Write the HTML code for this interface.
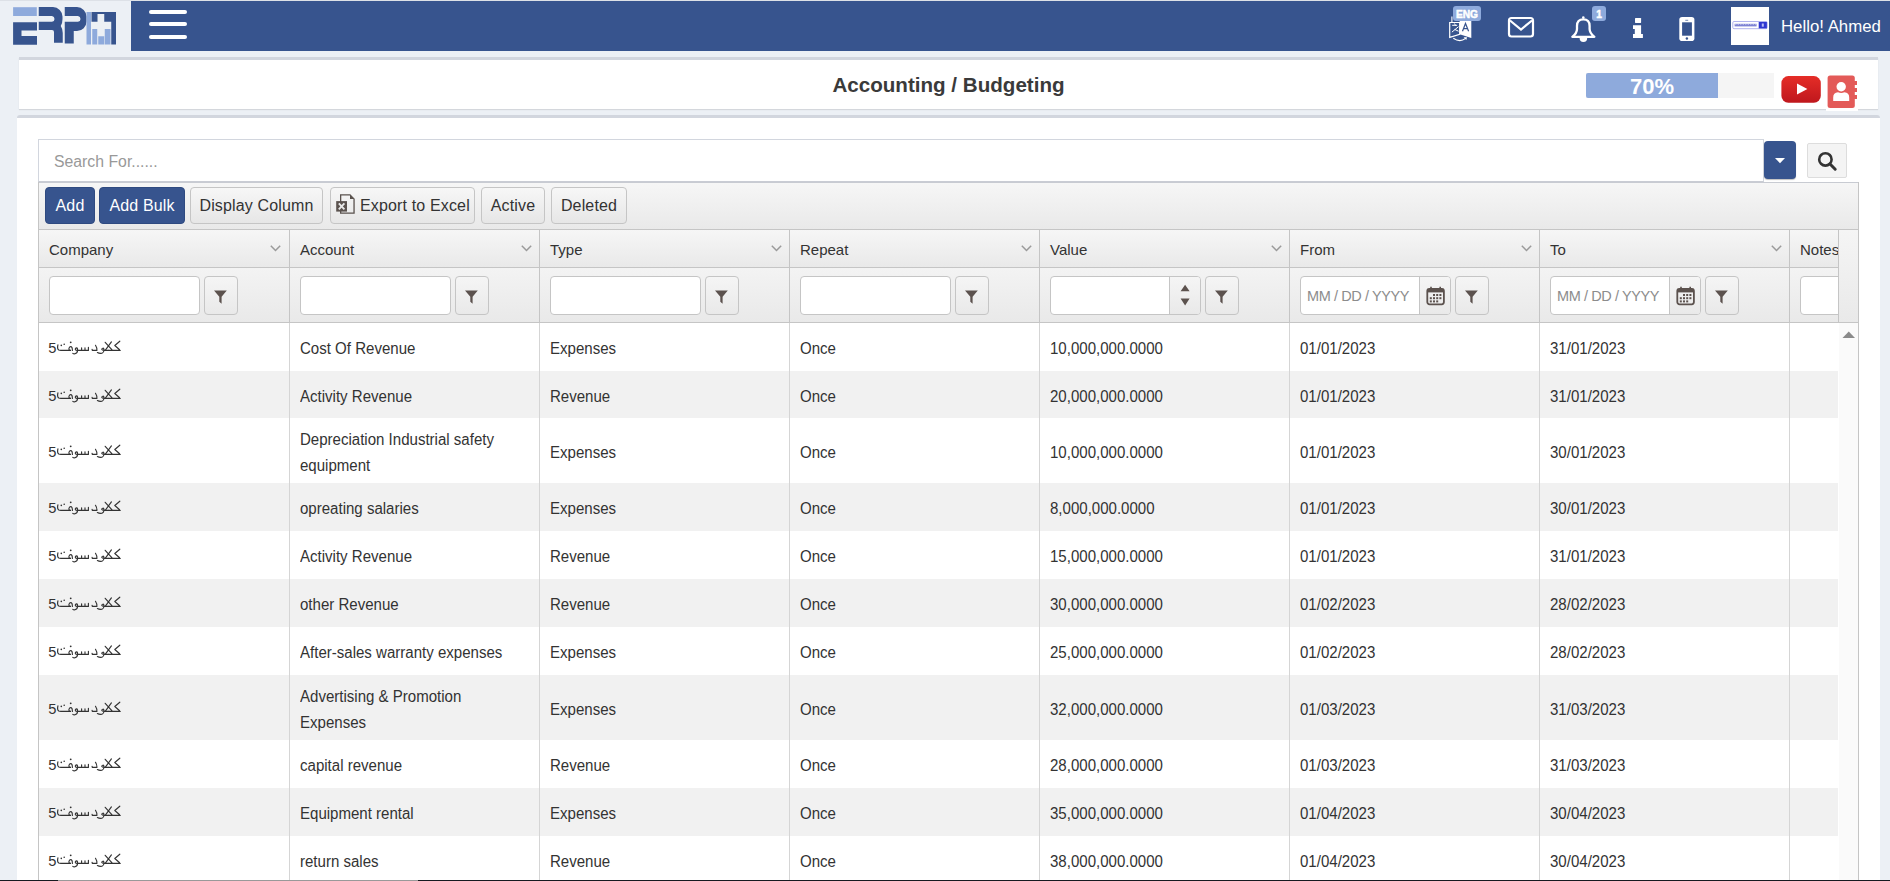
<!DOCTYPE html>
<html><head><meta charset="utf-8">
<style>
*{box-sizing:border-box;margin:0;padding:0}
html,body{width:1890px;height:881px;overflow:hidden}
body{background:#ecf0f5;font-family:"Liberation Sans",sans-serif;color:#333;position:relative}
.a{position:absolute}
#topline{left:0;top:0;width:1890px;height:1px;background:#dde1e7}
#nav{left:131px;top:1px;width:1759px;height:50px;background:#37548e}
.hb{left:149px;width:38px;height:4px;border-radius:2px;background:#fff}
.badge{background:#8eaadc;color:#fff;font-weight:bold;font-size:10.2px;-webkit-text-stroke:0.5px #fff;border-radius:3px;text-align:center;line-height:17px;height:15px}
#hello{left:1781px;top:16px;color:#fff;font-size:16.8px;line-height:22px;white-space:nowrap}
#hcard{left:19px;top:57px;width:1859px;height:52px;background:#fff;border-top:3px solid #d2d6de;box-shadow:0 1px 1px rgba(0,0,0,.1)}
#title{left:0;top:73px;width:1897px;text-align:center;font-weight:bold;font-size:20.6px;color:#3a3a3a;line-height:24px}
#card{left:17px;top:115px;width:1863px;height:800px;background:#fff;border-top:3px solid #d2d6de;border-radius:3px}
#search{left:38px;top:139px;width:1726px;height:43px;border:1px solid #d2d6de;border-bottom-color:#c9ccd4;background:#fff}
#search span{position:absolute;left:15px;top:13px;color:#999;font-size:15.8px;line-height:18px}
#dd{left:1764px;top:141px;width:32px;height:38px;background:#37548e;border-radius:4px;box-shadow:0 1px 1px rgba(0,0,0,.25)}
#sbtn{left:1807px;top:143px;width:40px;height:35px;background:#f4f4f4;border:1px solid #ddd;border-radius:2px}
#grid{left:38px;top:182px;width:1821px;height:720px;border:1px solid #c5c5c5;border-top:0;background:#fff;overflow:hidden}
#tb{left:0;top:0;width:1819px;height:48px;background:linear-gradient(#f6f6f6,#e9e9e9);border-top:1px solid #c8cbd2;border-bottom:1px solid #c5c5c5}
.btn{position:absolute;top:4px;height:37px;border:1px solid #c5c5c5;border-radius:4px;background:linear-gradient(#f7f7f7,#e6e6e6);font-size:16px;letter-spacing:0.15px;line-height:35px;text-align:center;color:#333;white-space:nowrap}
.btn.p{background:#37548e;border-color:#2f4a80;color:#fff}
#hdr{left:0;top:48px;width:1819px;height:38px;background:linear-gradient(#f6f6f6,#e9e9e9);border-bottom:1px solid #c5c5c5}
#flt{left:0;top:86px;width:1819px;height:55px;background:linear-gradient(#f3f3f3,#e9e9e9);border-bottom:1px solid #c5c5c5}
.hc{position:absolute;top:0;height:100%}
.ht{position:absolute;left:10px;top:12px;font-size:15px;line-height:16px;color:#333;white-space:nowrap}
.chev{position:absolute;top:15px}
.fin{position:absolute;top:8px;height:39px;background:#fff;border:1px solid #c5c5c5;border-radius:4px}
.fbt{position:absolute;top:8px;width:33px;height:39px;border:1px solid #c5c5c5;border-radius:4px;background:linear-gradient(#f5f5f5,#e9e9e9)}
.fic{position:absolute;left:9px;top:13px}
.spn{position:absolute;left:118px;top:0;width:31px;height:37px;border-left:1px solid #c5c5c5;border-radius:0 3px 3px 0;background:linear-gradient(#f5f5f5,#e9e9e9)}
.ph{position:absolute;left:6px;top:11px;font-size:14.5px;letter-spacing:-0.4px;line-height:16px;color:#8c8c8c;white-space:nowrap}
.r{position:absolute;left:0;width:1799px}
.r.g{background:#f1f1f1}
.c{position:absolute;top:0;height:100%;display:flex;align-items:center}
.ct{margin-left:10px;font-size:16px;line-height:26px;color:#333;white-space:nowrap;transform:scaleX(.94);transform-origin:0 50%;position:relative;top:2px}
.ar{display:block;margin-left:9px;margin-top:-2px}
</style></head><body>
<svg width="0" height="0" style="position:absolute"><defs><g id="arab">
<text x="0.3" y="15.6" font-family="Liberation Sans" font-size="14.7" fill="#333">5</text>
<g fill="none" stroke="#333" stroke-width="1.15" stroke-linecap="round" stroke-linejoin="round">
<path d="M9.9 7.8Q9 11.8 10.8 13Q11.6 13.4 13 13.4H22.5"/>
<path d="M22.5 13.4Q20.6 13.2 21 11.1Q21.8 9.2 23.4 9.8Q24.5 10.7 24.4 13.4"/>
<path d="M40.4 10.3V13.4H29.5Q29.9 11 28.6 10.9Q27.2 11 27.3 12.3Q27.6 13.4 29.5 13.4Q29.5 16 27 16.8Q25.5 17 24.8 16.4M33.6 13.4V10.8M37 13.4V10.8"/>
<path d="M47.5 8.3Q49 10.5 48.9 13.4H44.3L44.1 12.3"/>
<path d="M60.4 13.4H55.9Q56.2 11 54.8 11.2Q53.6 11.4 53.8 12.6Q54.2 13.4 55.9 13.4Q56 15.5 54 16.3Q51.5 16.8 49.4 15.6"/>
<path d="M57.2 5.3L64.5 13.4M57.2 13.4L63.4 4.9M60.4 13.4H72.2M66.8 8.5L71.8 4.2M66.8 8.5L71.6 12.8"/>
</g>
<g fill="#333"><circle cx="13.3" cy="8.4" r="0.8"/><circle cx="16.2" cy="7.3" r="0.8"/><circle cx="22.7" cy="5.3" r="0.9"/></g>
</g></defs></svg>
<div class="a" id="topline"></div>
<!-- logo -->
<svg class="a" style="left:0;top:0" width="131" height="52" viewBox="0 0 131 52">
 <rect x="13.1" y="7.2" width="23.7" height="8.8" fill="#8eaadc"/>
 <path d="M13.1 22.2H37V30.4H21.5V36H37V44.8H13.1Z" fill="#37548e"/>
 <path d="M38.75 7.1H53A9.5 9.5 0 0 1 62.5 16.6V19Q62.5 23 60.75 26Q62.75 29 62.75 33V42.75H54V32Q54 30 52 30H38.75V21.75H52A2.9 2.9 0 0 0 52 16H38.75Z" fill="#37548e"/>
 <path d="M64.75 7.1H77A9.5 9.5 0 0 1 86.5 16.6V21.5A9.5 9.5 0 0 1 77 31H73.75V43.5H64.75V21.75H78A2.9 2.9 0 0 0 78 16H64.75Z" fill="#37548e"/>
 <rect x="86.5" y="12" width="4.5" height="32.5" fill="#8eaadc"/>
 <path d="M91.5 12H116V44.5H111.25V21.75H104.25V14H97.5V21.75H91.5Z" fill="#37548e"/>
 <rect x="92.25" y="29" width="5" height="15.5" fill="#8eaadc"/>
 <rect x="98.25" y="36.25" width="6" height="8.25" fill="#8eaadc"/>
 <rect x="104.75" y="29" width="5.75" height="15.5" fill="#8eaadc"/>
</svg>
<div class="a" id="nav"></div>
<div class="a hb" style="top:10px"></div>
<div class="a hb" style="top:22px"></div>
<div class="a hb" style="top:35px"></div>
<!-- nav icons -->
<svg class="a" style="left:1440px;top:0" width="290" height="52" viewBox="1440 0 290 52" fill="none" stroke="#fff">
 <!-- translate -->
 <path d="M1449.7 22.5H1459.7V34.3L1449.7 37.4Z" stroke-width="1.2"/>
 <path d="M1451.9 22V16.4" stroke-width="1.1"/>
 <path d="M1452.2 25.3H1457.2M1454.4 23.5L1455.8 25.8M1451.9 32.1L1458.5 26.7M1454.6 29.4L1458.5 31.2" stroke-width="1"/>
 <path d="M1459.7 21H1471.3V37.9L1459.7 34.2Z" fill="#fff" stroke="none"/>
 <path d="M1462.5 31.3L1465.5 23.5L1468.6 31.3M1463.6 28.6H1467.4" stroke="#37548e" stroke-width="1.2"/>
 <path d="M1453.3 38.2Q1459.9 42.8 1465.6 38.4" stroke-width="1.2"/>
 <path d="M1463.6 37.3L1467 37.2L1466.3 39.9Z" fill="#fff" stroke="none"/>
 <!-- mail -->
 <rect x="1509" y="18" width="24" height="18.5" rx="2.5" stroke-width="2.2"/>
 <path d="M1510 20.5l11 9 11-9" stroke-width="2.2"/>
 <!-- bell -->
 <path d="M1583.3 19.4C1579.2 19.4 1577 22 1577 26V29C1577 32 1574.6 35 1572.3 36.8H1594.4C1592.1 35 1589.6 32 1589.6 29V26C1589.6 22 1587.4 19.4 1583.3 19.4Z" stroke-width="2.3" stroke-linejoin="round"/>
 <path d="M1579.6 38A3.7 3.9 0 0 0 1587.2 38Z" fill="#fff" stroke="none"/>
 <circle cx="1583.3" cy="17.6" r="1.3" fill="#fff" stroke="none"/>
 <!-- info -->
 <rect x="1635" y="18" width="6.1" height="4.9" fill="#fff" stroke="none" rx="0.6"/>
 <path d="M1633 25.3H1641.1V33.9H1642.9V37.9H1633V33.9H1634.8V29.1H1633Z" fill="#fff" stroke="none"/>
 <!-- mobile -->
 <rect x="1679.3" y="17" width="15.1" height="24" rx="2.8" fill="#fff" stroke="none"/>
 <rect x="1682.1" y="22.3" width="9.8" height="13.4" fill="#37548e" stroke="none"/>
 <circle cx="1686.9" cy="38.5" r="1.2" fill="#37548e" stroke="none"/>
 <path d="M1685.3 20.3H1688.2" stroke="#37548e" stroke-width="0.7"/>
</svg>
<div class="a badge" style="left:1453px;top:6px;width:28px">ENG</div>
<div class="a badge" style="left:1592px;top:6px;width:14px">1</div>
<div class="a" style="left:1731px;top:7px;width:38px;height:38px;background:#fff"></div>
<svg class="a" style="left:1731px;top:7px" width="38" height="38" viewBox="0 0 38 38">
 <rect x="1.8" y="14.5" width="34.4" height="7.2" rx="1.2" fill="none" stroke="#a9acec" stroke-width="0.9"/>
 <rect x="27.7" y="15" width="8.2" height="6.4" fill="#2e37d0"/>
 <path d="M3.6 16.8h22v2.6h-22z" fill="#7d82d4"/>
 <path d="M4.2 17.4h21" stroke="#fff" stroke-width="0.5" stroke-dasharray="1.2 1.3"/>
 <rect x="30.8" y="16.5" width="2" height="3.2" fill="#b9bcf5"/>
</svg>
<div class="a" id="hello">Hello! Ahmed</div>

<!-- header card -->
<div class="a" id="hcard"></div>
<div class="a" id="title">Accounting / Budgeting</div>
<div class="a" style="left:1586px;top:73px;width:188px;height:25px;background:#f5f5f5"></div>
<div class="a" style="left:1586px;top:73px;width:132px;height:25px;background:#8eaadc;border-radius:2px 0 0 2px;color:#fff;font-weight:bold;font-size:22px;line-height:27px;text-align:center">70%</div>
<svg class="a" style="left:1780px;top:75px" width="42" height="29" viewBox="0 0 42 29">
 <defs><linearGradient id="yt" x1="0" y1="0" x2="0" y2="1"><stop offset="0" stop-color="#e52d27"/><stop offset="1" stop-color="#bf171d"/></linearGradient></defs>
 <rect x="1.4" y="1.1" width="39.4" height="26.6" rx="7" fill="url(#yt)"/>
 <path d="M17 8.5V19.5L27.4 14Z" fill="#fff"/>
</svg>
<div class="a" style="left:1826px;top:105px;width:32px;height:6px;background:#fff"></div>
<svg class="a" style="left:1826px;top:74px" width="34" height="36" viewBox="0 0 34 36">
 <rect x="1.6" y="1.5" width="27.2" height="32.6" rx="2.5" fill="#e35a58"/>
 <rect x="28" y="7" width="3" height="4" fill="#e35a58"/>
 <rect x="28" y="14" width="3" height="4" fill="#e35a58"/>
 <rect x="28" y="21" width="3" height="4" fill="#e35a58"/>
 <circle cx="15.2" cy="12.8" r="4.7" fill="#fff"/>
 <path d="M7.2 27V23.5Q7.2 18.5 12 18.3Q15.2 19.8 18.4 18.3Q23.2 18.5 23.2 23.5V27Z" fill="#fff"/>
</svg>

<!-- main card -->
<div class="a" id="card"></div>
<div class="a" id="search"><span>Search For......</span></div>
<div class="a" id="dd"><svg width="32" height="38"><path d="M11 17h10l-5 5.3z" fill="#fff"/></svg></div>
<div class="a" id="sbtn"><svg width="40" height="34" viewBox="0 0 40 34"><circle cx="17.4" cy="15.4" r="6.2" fill="none" stroke="#333" stroke-width="2.6"/><path d="M22 20l5.2 5.2" stroke="#333" stroke-width="3" stroke-linecap="round"/></svg></div>

<div class="a" id="grid">
 <div class="a" id="tb">
  <div class="btn p" style="left:6px;width:50px">Add</div>
  <div class="btn p" style="left:60px;width:86px">Add Bulk</div>
  <div class="btn" style="left:151px;width:133px">Display Column</div>
  <div class="btn" style="left:291px;width:145px;text-align:left;padding-left:29px">Export to Excel</div>
  <svg class="a" style="left:296px;top:11px" width="21" height="22" viewBox="0 0 21 22">
   <path d="M5.65 0.85H15L19.05 4.9V19.05H5.65Z" fill="none" stroke="#5a524e" stroke-width="1.3"/>
   <path d="M15 0.85V4.9H19.05Z" fill="#5a524e"/>
   <rect x="1.2" y="7.1" width="10.8" height="10.5" fill="#5a524e"/>
   <path d="M3.8 9.4L9.4 15.3M9.4 9.4L3.8 15.3" stroke="#e8e8e8" stroke-width="1.9"/>
  </svg>
  <div class="btn" style="left:442px;width:64px">Active</div>
  <div class="btn" style="left:512px;width:76px">Deleted</div>
 </div>
<div class="a" id="hdr">
<div class="hc" style="left:0px;width:250px;"><span class="ht">Company</span><svg class="chev" style="left:231px" width="11" height="7" viewBox="0 0 11 7"><path d="M0.8 0.8L5.5 5.5L10.2 0.8" fill="none" stroke="#9a9a9a" stroke-width="1.5"/></svg></div>
<div class="hc" style="left:250px;width:250px;border-left:1px solid #c5c5c5;"><span class="ht">Account</span><svg class="chev" style="left:231px" width="11" height="7" viewBox="0 0 11 7"><path d="M0.8 0.8L5.5 5.5L10.2 0.8" fill="none" stroke="#9a9a9a" stroke-width="1.5"/></svg></div>
<div class="hc" style="left:500px;width:250px;border-left:1px solid #c5c5c5;"><span class="ht">Type</span><svg class="chev" style="left:231px" width="11" height="7" viewBox="0 0 11 7"><path d="M0.8 0.8L5.5 5.5L10.2 0.8" fill="none" stroke="#9a9a9a" stroke-width="1.5"/></svg></div>
<div class="hc" style="left:750px;width:250px;border-left:1px solid #c5c5c5;"><span class="ht">Repeat</span><svg class="chev" style="left:231px" width="11" height="7" viewBox="0 0 11 7"><path d="M0.8 0.8L5.5 5.5L10.2 0.8" fill="none" stroke="#9a9a9a" stroke-width="1.5"/></svg></div>
<div class="hc" style="left:1000px;width:250px;border-left:1px solid #c5c5c5;"><span class="ht">Value</span><svg class="chev" style="left:231px" width="11" height="7" viewBox="0 0 11 7"><path d="M0.8 0.8L5.5 5.5L10.2 0.8" fill="none" stroke="#9a9a9a" stroke-width="1.5"/></svg></div>
<div class="hc" style="left:1250px;width:250px;border-left:1px solid #c5c5c5;"><span class="ht">From</span><svg class="chev" style="left:231px" width="11" height="7" viewBox="0 0 11 7"><path d="M0.8 0.8L5.5 5.5L10.2 0.8" fill="none" stroke="#9a9a9a" stroke-width="1.5"/></svg></div>
<div class="hc" style="left:1500px;width:250px;border-left:1px solid #c5c5c5;"><span class="ht">To</span><svg class="chev" style="left:231px" width="11" height="7" viewBox="0 0 11 7"><path d="M0.8 0.8L5.5 5.5L10.2 0.8" fill="none" stroke="#9a9a9a" stroke-width="1.5"/></svg></div>
<div class="hc" style="left:1750px;width:49px;border-left:1px solid #c5c5c5;"><span class="ht">Notes</span></div>
<div class="hc" style="left:1799px;width:20px;border-left:1px solid #c5c5c5"></div>
</div>
<div class="a" id="flt">
<div class="hc" style="left:0px;width:250px;overflow:hidden;"><div class="fin" style="left:10px;width:151px"></div><div class="fbt" style="left:165px;width:34px"><svg class="fic" width="13" height="15" viewBox="0 0 13 15"><path d="M0 0.5H12.8L7.6 6.8V13.8L5.3 11.7V6.8Z" fill="#5c524e"/></svg></div></div>
<div class="hc" style="left:250px;width:250px;overflow:hidden;border-left:1px solid #c5c5c5;"><div class="fin" style="left:10px;width:151px"></div><div class="fbt" style="left:165px;width:34px"><svg class="fic" width="13" height="15" viewBox="0 0 13 15"><path d="M0 0.5H12.8L7.6 6.8V13.8L5.3 11.7V6.8Z" fill="#5c524e"/></svg></div></div>
<div class="hc" style="left:500px;width:250px;overflow:hidden;border-left:1px solid #c5c5c5;"><div class="fin" style="left:10px;width:151px"></div><div class="fbt" style="left:165px;width:34px"><svg class="fic" width="13" height="15" viewBox="0 0 13 15"><path d="M0 0.5H12.8L7.6 6.8V13.8L5.3 11.7V6.8Z" fill="#5c524e"/></svg></div></div>
<div class="hc" style="left:750px;width:250px;overflow:hidden;border-left:1px solid #c5c5c5;"><div class="fin" style="left:10px;width:151px"></div><div class="fbt" style="left:165px;width:34px"><svg class="fic" width="13" height="15" viewBox="0 0 13 15"><path d="M0 0.5H12.8L7.6 6.8V13.8L5.3 11.7V6.8Z" fill="#5c524e"/></svg></div></div>
<div class="hc" style="left:1000px;width:250px;overflow:hidden;border-left:1px solid #c5c5c5;"><div class="fin" style="left:10px;width:151px"><div class="spn"></div><svg class="a" style="left:128px;top:6px" width="14" height="24" viewBox="0 0 14 24"><path d="M1.6 8.3h9L6.1 1.8z M1.6 15.4h9L6.1 22.5z" fill="#5c524e"/></svg></div><div class="fbt" style="left:165px;width:34px"><svg class="fic" width="13" height="15" viewBox="0 0 13 15"><path d="M0 0.5H12.8L7.6 6.8V13.8L5.3 11.7V6.8Z" fill="#5c524e"/></svg></div></div>
<div class="hc" style="left:1250px;width:250px;overflow:hidden;border-left:1px solid #c5c5c5;"><div class="fin" style="left:10px;width:151px"><span class="ph">MM / DD / YYYY</span><div class="spn"></div><svg class="a" style="left:125px;top:9px" width="20" height="20" viewBox="0 0 20 20"><rect x="1.3" y="2.8" width="16.6" height="15.5" rx="2.2" fill="none" stroke="#5c524e" stroke-width="1.8"/><rect x="1.3" y="2.8" width="16.6" height="3.6" fill="#5c524e"/><path d="M5 0.8v3M14.2 0.8v3" stroke="#5c524e" stroke-width="1.6"/><g fill="#5c524e"><rect x="7" y="8" width="2" height="2"/><rect x="10.2" y="8" width="2" height="2"/><rect x="13.4" y="8" width="2" height="2"/><rect x="3.8" y="11.2" width="2" height="2"/><rect x="7" y="11.2" width="2" height="2"/><rect x="10.2" y="11.2" width="2" height="2"/><rect x="13.4" y="11.2" width="2" height="2"/><rect x="3.8" y="14.4" width="2" height="2"/><rect x="7" y="14.4" width="2" height="2"/><rect x="10.2" y="14.4" width="2" height="2"/></g></svg></div><div class="fbt" style="left:165px;width:34px"><svg class="fic" width="13" height="15" viewBox="0 0 13 15"><path d="M0 0.5H12.8L7.6 6.8V13.8L5.3 11.7V6.8Z" fill="#5c524e"/></svg></div></div>
<div class="hc" style="left:1500px;width:250px;overflow:hidden;border-left:1px solid #c5c5c5;"><div class="fin" style="left:10px;width:151px"><span class="ph">MM / DD / YYYY</span><div class="spn"></div><svg class="a" style="left:125px;top:9px" width="20" height="20" viewBox="0 0 20 20"><rect x="1.3" y="2.8" width="16.6" height="15.5" rx="2.2" fill="none" stroke="#5c524e" stroke-width="1.8"/><rect x="1.3" y="2.8" width="16.6" height="3.6" fill="#5c524e"/><path d="M5 0.8v3M14.2 0.8v3" stroke="#5c524e" stroke-width="1.6"/><g fill="#5c524e"><rect x="7" y="8" width="2" height="2"/><rect x="10.2" y="8" width="2" height="2"/><rect x="13.4" y="8" width="2" height="2"/><rect x="3.8" y="11.2" width="2" height="2"/><rect x="7" y="11.2" width="2" height="2"/><rect x="10.2" y="11.2" width="2" height="2"/><rect x="13.4" y="11.2" width="2" height="2"/><rect x="3.8" y="14.4" width="2" height="2"/><rect x="7" y="14.4" width="2" height="2"/><rect x="10.2" y="14.4" width="2" height="2"/></g></svg></div><div class="fbt" style="left:165px;width:34px"><svg class="fic" width="13" height="15" viewBox="0 0 13 15"><path d="M0 0.5H12.8L7.6 6.8V13.8L5.3 11.7V6.8Z" fill="#5c524e"/></svg></div></div>
<div class="hc" style="left:1750px;width:49px;overflow:hidden;border-left:1px solid #c5c5c5;"><div class="fin" style="left:10px;width:60px"></div></div>
</div>
<div class="a" style="left:1799px;top:48px;width:20px;height:93px;border-left:1px solid #c5c5c5;border-bottom:1px solid #c5c5c5;background:linear-gradient(#f5f5f5,#e9e9e9)"></div>
<div class="a" id="sb" style="left:1800px;top:141px;width:19px;height:558px;background:#fafafa"><svg class="a" style="left:3px;top:7px" width="14" height="9" viewBox="0 0 14 9"><path d="M0.5 8H13L6.75 1.5Z" fill="#8a8a8a"/></svg></div>
<div class="r" style="top:141px;height:48px"><div class="c" style="left:0px;width:250px;"><svg class="ar" width="74" height="18" viewBox="0 0 74 18"><use href="#arab"/></svg></div><div class="c" style="left:250px;width:250px;border-left:1px solid #d5d5d5;"><div class="ct">Cost Of Revenue</div></div><div class="c" style="left:500px;width:250px;border-left:1px solid #d5d5d5;"><div class="ct">Expenses</div></div><div class="c" style="left:750px;width:250px;border-left:1px solid #d5d5d5;"><div class="ct">Once</div></div><div class="c" style="left:1000px;width:250px;border-left:1px solid #d5d5d5;"><div class="ct">10,000,000.0000</div></div><div class="c" style="left:1250px;width:250px;border-left:1px solid #d5d5d5;"><div class="ct">01/01/2023</div></div><div class="c" style="left:1500px;width:250px;border-left:1px solid #d5d5d5;"><div class="ct">31/01/2023</div></div><div class="c" style="left:1750px;width:49px;border-left:1px solid #d5d5d5;"><div class="ct"></div></div></div>
<div class="r g" style="top:189px;height:47px"><div class="c" style="left:0px;width:250px;"><svg class="ar" width="74" height="18" viewBox="0 0 74 18"><use href="#arab"/></svg></div><div class="c" style="left:250px;width:250px;border-left:1px solid #d5d5d5;"><div class="ct">Activity Revenue</div></div><div class="c" style="left:500px;width:250px;border-left:1px solid #d5d5d5;"><div class="ct">Revenue</div></div><div class="c" style="left:750px;width:250px;border-left:1px solid #d5d5d5;"><div class="ct">Once</div></div><div class="c" style="left:1000px;width:250px;border-left:1px solid #d5d5d5;"><div class="ct">20,000,000.0000</div></div><div class="c" style="left:1250px;width:250px;border-left:1px solid #d5d5d5;"><div class="ct">01/01/2023</div></div><div class="c" style="left:1500px;width:250px;border-left:1px solid #d5d5d5;"><div class="ct">31/01/2023</div></div><div class="c" style="left:1750px;width:49px;border-left:1px solid #d5d5d5;"><div class="ct"></div></div></div>
<div class="r" style="top:236px;height:65px"><div class="c" style="left:0px;width:250px;"><svg class="ar" width="74" height="18" viewBox="0 0 74 18"><use href="#arab"/></svg></div><div class="c" style="left:250px;width:250px;border-left:1px solid #d5d5d5;"><div class="ct">Depreciation Industrial safety<br>equipment</div></div><div class="c" style="left:500px;width:250px;border-left:1px solid #d5d5d5;"><div class="ct">Expenses</div></div><div class="c" style="left:750px;width:250px;border-left:1px solid #d5d5d5;"><div class="ct">Once</div></div><div class="c" style="left:1000px;width:250px;border-left:1px solid #d5d5d5;"><div class="ct">10,000,000.0000</div></div><div class="c" style="left:1250px;width:250px;border-left:1px solid #d5d5d5;"><div class="ct">01/01/2023</div></div><div class="c" style="left:1500px;width:250px;border-left:1px solid #d5d5d5;"><div class="ct">30/01/2023</div></div><div class="c" style="left:1750px;width:49px;border-left:1px solid #d5d5d5;"><div class="ct"></div></div></div>
<div class="r g" style="top:301px;height:48px"><div class="c" style="left:0px;width:250px;"><svg class="ar" width="74" height="18" viewBox="0 0 74 18"><use href="#arab"/></svg></div><div class="c" style="left:250px;width:250px;border-left:1px solid #d5d5d5;"><div class="ct">opreating salaries</div></div><div class="c" style="left:500px;width:250px;border-left:1px solid #d5d5d5;"><div class="ct">Expenses</div></div><div class="c" style="left:750px;width:250px;border-left:1px solid #d5d5d5;"><div class="ct">Once</div></div><div class="c" style="left:1000px;width:250px;border-left:1px solid #d5d5d5;"><div class="ct">8,000,000.0000</div></div><div class="c" style="left:1250px;width:250px;border-left:1px solid #d5d5d5;"><div class="ct">01/01/2023</div></div><div class="c" style="left:1500px;width:250px;border-left:1px solid #d5d5d5;"><div class="ct">30/01/2023</div></div><div class="c" style="left:1750px;width:49px;border-left:1px solid #d5d5d5;"><div class="ct"></div></div></div>
<div class="r" style="top:349px;height:48px"><div class="c" style="left:0px;width:250px;"><svg class="ar" width="74" height="18" viewBox="0 0 74 18"><use href="#arab"/></svg></div><div class="c" style="left:250px;width:250px;border-left:1px solid #d5d5d5;"><div class="ct">Activity Revenue</div></div><div class="c" style="left:500px;width:250px;border-left:1px solid #d5d5d5;"><div class="ct">Revenue</div></div><div class="c" style="left:750px;width:250px;border-left:1px solid #d5d5d5;"><div class="ct">Once</div></div><div class="c" style="left:1000px;width:250px;border-left:1px solid #d5d5d5;"><div class="ct">15,000,000.0000</div></div><div class="c" style="left:1250px;width:250px;border-left:1px solid #d5d5d5;"><div class="ct">01/01/2023</div></div><div class="c" style="left:1500px;width:250px;border-left:1px solid #d5d5d5;"><div class="ct">31/01/2023</div></div><div class="c" style="left:1750px;width:49px;border-left:1px solid #d5d5d5;"><div class="ct"></div></div></div>
<div class="r g" style="top:397px;height:48px"><div class="c" style="left:0px;width:250px;"><svg class="ar" width="74" height="18" viewBox="0 0 74 18"><use href="#arab"/></svg></div><div class="c" style="left:250px;width:250px;border-left:1px solid #d5d5d5;"><div class="ct">other Revenue</div></div><div class="c" style="left:500px;width:250px;border-left:1px solid #d5d5d5;"><div class="ct">Revenue</div></div><div class="c" style="left:750px;width:250px;border-left:1px solid #d5d5d5;"><div class="ct">Once</div></div><div class="c" style="left:1000px;width:250px;border-left:1px solid #d5d5d5;"><div class="ct">30,000,000.0000</div></div><div class="c" style="left:1250px;width:250px;border-left:1px solid #d5d5d5;"><div class="ct">01/02/2023</div></div><div class="c" style="left:1500px;width:250px;border-left:1px solid #d5d5d5;"><div class="ct">28/02/2023</div></div><div class="c" style="left:1750px;width:49px;border-left:1px solid #d5d5d5;"><div class="ct"></div></div></div>
<div class="r" style="top:445px;height:48px"><div class="c" style="left:0px;width:250px;"><svg class="ar" width="74" height="18" viewBox="0 0 74 18"><use href="#arab"/></svg></div><div class="c" style="left:250px;width:250px;border-left:1px solid #d5d5d5;"><div class="ct">After-sales warranty expenses</div></div><div class="c" style="left:500px;width:250px;border-left:1px solid #d5d5d5;"><div class="ct">Expenses</div></div><div class="c" style="left:750px;width:250px;border-left:1px solid #d5d5d5;"><div class="ct">Once</div></div><div class="c" style="left:1000px;width:250px;border-left:1px solid #d5d5d5;"><div class="ct">25,000,000.0000</div></div><div class="c" style="left:1250px;width:250px;border-left:1px solid #d5d5d5;"><div class="ct">01/02/2023</div></div><div class="c" style="left:1500px;width:250px;border-left:1px solid #d5d5d5;"><div class="ct">28/02/2023</div></div><div class="c" style="left:1750px;width:49px;border-left:1px solid #d5d5d5;"><div class="ct"></div></div></div>
<div class="r g" style="top:493px;height:65px"><div class="c" style="left:0px;width:250px;"><svg class="ar" width="74" height="18" viewBox="0 0 74 18"><use href="#arab"/></svg></div><div class="c" style="left:250px;width:250px;border-left:1px solid #d5d5d5;"><div class="ct">Advertising &amp; Promotion<br>Expenses</div></div><div class="c" style="left:500px;width:250px;border-left:1px solid #d5d5d5;"><div class="ct">Expenses</div></div><div class="c" style="left:750px;width:250px;border-left:1px solid #d5d5d5;"><div class="ct">Once</div></div><div class="c" style="left:1000px;width:250px;border-left:1px solid #d5d5d5;"><div class="ct">32,000,000.0000</div></div><div class="c" style="left:1250px;width:250px;border-left:1px solid #d5d5d5;"><div class="ct">01/03/2023</div></div><div class="c" style="left:1500px;width:250px;border-left:1px solid #d5d5d5;"><div class="ct">31/03/2023</div></div><div class="c" style="left:1750px;width:49px;border-left:1px solid #d5d5d5;"><div class="ct"></div></div></div>
<div class="r" style="top:558px;height:48px"><div class="c" style="left:0px;width:250px;"><svg class="ar" width="74" height="18" viewBox="0 0 74 18"><use href="#arab"/></svg></div><div class="c" style="left:250px;width:250px;border-left:1px solid #d5d5d5;"><div class="ct">capital revenue</div></div><div class="c" style="left:500px;width:250px;border-left:1px solid #d5d5d5;"><div class="ct">Revenue</div></div><div class="c" style="left:750px;width:250px;border-left:1px solid #d5d5d5;"><div class="ct">Once</div></div><div class="c" style="left:1000px;width:250px;border-left:1px solid #d5d5d5;"><div class="ct">28,000,000.0000</div></div><div class="c" style="left:1250px;width:250px;border-left:1px solid #d5d5d5;"><div class="ct">01/03/2023</div></div><div class="c" style="left:1500px;width:250px;border-left:1px solid #d5d5d5;"><div class="ct">31/03/2023</div></div><div class="c" style="left:1750px;width:49px;border-left:1px solid #d5d5d5;"><div class="ct"></div></div></div>
<div class="r g" style="top:606px;height:48px"><div class="c" style="left:0px;width:250px;"><svg class="ar" width="74" height="18" viewBox="0 0 74 18"><use href="#arab"/></svg></div><div class="c" style="left:250px;width:250px;border-left:1px solid #d5d5d5;"><div class="ct">Equipment rental</div></div><div class="c" style="left:500px;width:250px;border-left:1px solid #d5d5d5;"><div class="ct">Expenses</div></div><div class="c" style="left:750px;width:250px;border-left:1px solid #d5d5d5;"><div class="ct">Once</div></div><div class="c" style="left:1000px;width:250px;border-left:1px solid #d5d5d5;"><div class="ct">35,000,000.0000</div></div><div class="c" style="left:1250px;width:250px;border-left:1px solid #d5d5d5;"><div class="ct">01/04/2023</div></div><div class="c" style="left:1500px;width:250px;border-left:1px solid #d5d5d5;"><div class="ct">30/04/2023</div></div><div class="c" style="left:1750px;width:49px;border-left:1px solid #d5d5d5;"><div class="ct"></div></div></div>
<div class="r" style="top:654px;height:48px"><div class="c" style="left:0px;width:250px;"><svg class="ar" width="74" height="18" viewBox="0 0 74 18"><use href="#arab"/></svg></div><div class="c" style="left:250px;width:250px;border-left:1px solid #d5d5d5;"><div class="ct">return sales</div></div><div class="c" style="left:500px;width:250px;border-left:1px solid #d5d5d5;"><div class="ct">Revenue</div></div><div class="c" style="left:750px;width:250px;border-left:1px solid #d5d5d5;"><div class="ct">Once</div></div><div class="c" style="left:1000px;width:250px;border-left:1px solid #d5d5d5;"><div class="ct">38,000,000.0000</div></div><div class="c" style="left:1250px;width:250px;border-left:1px solid #d5d5d5;"><div class="ct">01/04/2023</div></div><div class="c" style="left:1500px;width:250px;border-left:1px solid #d5d5d5;"><div class="ct">30/04/2023</div></div><div class="c" style="left:1750px;width:49px;border-left:1px solid #d5d5d5;"><div class="ct"></div></div></div>
</div>
<div class="a" style="left:0;top:880px;width:1890px;height:1px;background:#161a20"></div>
<div class="a" style="left:58px;top:880px;width:360px;height:1px;background:#999"></div>
</body></html>
